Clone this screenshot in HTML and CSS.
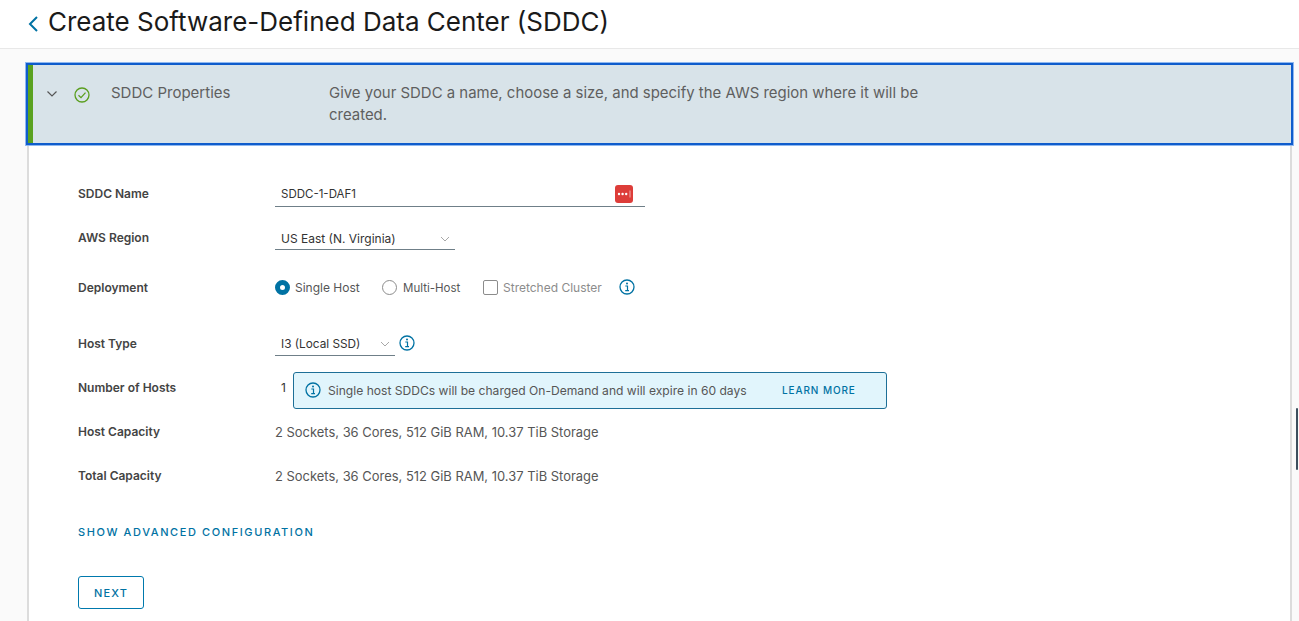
FILE: index.html
```html
<!DOCTYPE html>
<html lang="en">

<head>
    <meta charset="UTF-8">
    <title>Create SDDC</title>
    <link rel="stylesheet" href="styles.css">
</head>

<body>

    <header class="page-header">
        <svg class="back-icon" width="12" height="18" viewBox="0 0 12 18"><path d="M10 2 L3 9 L10 16" fill="none" stroke="#0072a3" stroke-width="2"/></svg>
        <h1>Create Software-Defined Data Center (SDDC)</h1>
    </header>

    <main class="content">
        <section class="card">
            <div class="step-header">
                <div class="step-bar"></div>
                <svg class="step-caret" width="12" height="8" viewBox="0 0 12 8"><path d="M1.5 1.5 L6 6 L10.5 1.5" fill="none" stroke="#565656" stroke-width="1.2"/></svg>
                <svg class="step-check" width="16" height="16" viewBox="0 0 16 16"><circle cx="8" cy="8" r="7" fill="none" stroke="#5a9e1e" stroke-width="1.3"/><path d="M4.5 8.2 L7 10.6 L11.5 5.6" fill="none" stroke="#5a9e1e" stroke-width="1.3"/></svg>
                <div class="step-title">SDDC Properties</div>
                <div class="step-desc">Give your SDDC a name, choose a size, and specify the AWS region where it will be created.</div>
            </div>

            <form class="step-form">
                <div class="row row-name">
                    <label>SDDC Name</label>
                    <div class="field field-name">
                        <span>SDDC-1-DAF1</span>
                        <svg class="pw-badge" width="18" height="18" viewBox="0 0 18 18"><rect width="18" height="18" rx="3" fill="#dd3d39"/><circle cx="4" cy="9" r="1.2" fill="#fff"/><circle cx="7.6" cy="9" r="1.2" fill="#fff"/><circle cx="11.2" cy="9" r="1.2" fill="#fff"/><path d="M15 5.5 V12.5" stroke="#f6c9c7" stroke-width="0.8"/></svg>
                    </div>
                </div>
                <div class="row row-region">
                    <label>AWS Region</label>
                    <div class="field field-region">
                        <span>US East (N. Virginia)</span>
                        <svg width="10" height="6" viewBox="0 0 10 6"><path d="M1 1 L5 5 L9 1" fill="none" stroke="#a8a8a8"/></svg>
                    </div>
                </div>
                <div class="row row-deploy">
                    <label>Deployment</label>
                    <div class="options">
                        <span class="option opt-single"><span class="radio radio-on"></span>Single Host</span>
                        <span class="option opt-multi"><span class="radio"></span>Multi-Host</span>
                        <span class="option opt-stretched"><span class="checkbox"></span>Stretched Cluster</span>
                        <svg class="info" width="16" height="16" viewBox="0 0 16 16"><circle cx="8" cy="8" r="7" fill="none" stroke="#0072a3" stroke-width="1.3"/><circle cx="8" cy="4.6" r="1" fill="#0072a3"/><path d="M6.3 7 H8.5 V11.4 M6.2 11.6 H10" fill="none" stroke="#0072a3" stroke-width="1.2"/></svg>
                    </div>
                </div>
                <div class="row row-host">
                    <label>Host Type</label>
                    <div class="field field-host">
                        <span>I3 (Local SSD)</span>
                        <svg width="10" height="6" viewBox="0 0 10 6"><path d="M1 1 L5 5 L9 1" fill="none" stroke="#a8a8a8"/></svg>
                    </div>
                    <svg class="info info-host" width="16" height="16" viewBox="0 0 16 16"><circle cx="8" cy="8" r="7" fill="none" stroke="#0072a3" stroke-width="1.3"/><circle cx="8" cy="4.6" r="1" fill="#0072a3"/><path d="M6.3 7 H8.5 V11.4 M6.2 11.6 H10" fill="none" stroke="#0072a3" stroke-width="1.2"/></svg>
                </div>
                <div class="row row-count">
                    <label>Number of Hosts</label>
                    <span class="count">1</span>
                    <div class="alert">
                        <svg width="16" height="16" viewBox="0 0 16 16"><circle cx="8" cy="8" r="7" fill="none" stroke="#0072a3" stroke-width="1.3"/><circle cx="8" cy="4.6" r="1" fill="#0072a3"/><path d="M6.3 7 H8.5 V11.4 M6.2 11.6 H10" fill="none" stroke="#0072a3" stroke-width="1.2"/></svg>
                        <span class="alert-text">Single host SDDCs will be charged On-Demand and will expire in 60 days</span>
                        <a class="alert-link">LEARN MORE</a>
                    </div>
                </div>
                <div class="row row-capacity">
                    <label>Host Capacity</label>
                    <span class="value">2 Sockets, 36 Cores, 512 GiB RAM, 10.37 TiB Storage</span>
                </div>
                <div class="row row-capacity">
                    <label>Total Capacity</label>
                    <span class="value">2 Sockets, 36 Cores, 512 GiB RAM, 10.37 TiB Storage</span>
                </div>
                <a class="advanced">SHOW ADVANCED CONFIGURATION</a>
                <button type="button" class="next">NEXT</button>
            </form>
        </section>
    </main>

    <div class="scroll-thumb"></div>

</body>

</html>
```

FILE: styles.css
```css
html, body {
    height: 100%;
}

body {
    font-family: 'Inter', 'Noto Sans', sans-serif;
    margin: 0;
    padding: 0;
    background-color: #fafafa;
    color: #565656;
    overflow: hidden;
}

.page-header {
    display: flex;
    align-items: center;
    height: 48px;
    padding-left: 27px;
    background-color: #fff;
    border-bottom: 1px solid #e8e8e8;
}

.back-icon {
    margin-right: 9px;
}

h1 {
    margin: 0;
    font-size: 26px;
    font-weight: 400;
    color: #1a1a1a;
    white-space: nowrap;
    padding-bottom: 5px;
}

.content {
    padding: 14px 7px 0 27px;
}

.card {
    background-color: #fff;
    border-left: 2px solid #dcdcdc;
    border-right: 2px solid #dcdcdc;
    height: 558px;
}

.step-header {
    display: flex;
    align-items: flex-start;
    height: 78px;
    margin-left: -3px;
    margin-right: -3px;
    background-color: #d8e3e9;
    border: 2px solid #0f5ccc;
    outline: 1px solid #8fb8f0;
}

.step-bar {
    width: 5px;
    height: 78px;
    background-color: #5aa220;
    flex-shrink: 0;
}

.step-caret {
    margin: 25px 0 0 13px;
    flex-shrink: 0;
}

.step-check {
    margin: 22px 0 0 16px;
    flex-shrink: 0;
}

.step-title {
    width: 218px;
    margin: 17px 0 0 21px;
    flex-shrink: 0;
    font-size: 15px;
    line-height: 22px;
    color: #5f5f5f;
}

.step-desc {
    width: 610px;
    margin-top: 17px;
    font-size: 14.95px;
    line-height: 22px;
    color: #5f5f5f;
}

.step-form {
    padding: 0 0 0 49px;
    font-size: 12px;
}

.row {
    display: flex;
    align-items: center;
    height: 24px;
}

.row label {
    width: 197px;
    flex-shrink: 0;
    font-size: 12px;
    font-weight: 600;
    color: #444;
}

.row-name {
    margin-top: 36px;
}

.row-region {
    margin-top: 20px;
}

.row-deploy {
    margin-top: 26px;
}

.row-host {
    margin-top: 32px;
}

.row-count {
    margin-top: 20px;
}

.row-capacity {
    margin-top: 20px;
}

.field {
    display: flex;
    align-items: center;
    justify-content: space-between;
    box-sizing: border-box;
    height: 26px;
    padding: 0 5px 0 6px;
    border-bottom: 1px solid #6f7f88;
    color: #333;
    font-size: 11.5px;
}

.field-name {
    width: 370px;
    margin-top: 2px;
    padding-right: 12px;
}

.field-region {
    width: 180px;
    padding-top: 4px;
    font-size: 12px;
}

.field-host {
    width: 120px;
    padding-top: 2px;
    font-size: 11.8px;
}

.options {
    display: flex;
    align-items: center;
    font-size: 11.5px;
    color: #565656;
}

.option {
    display: flex;
    align-items: center;
    gap: 6px;
    padding-top: 1px;
}

.opt-single {
    width: 107px;
    font-size: 12px;
    gap: 5px;
}

.opt-multi {
    width: 101px;
}

.opt-stretched {
    width: 136px;
    font-size: 12px;
    gap: 5px;
    color: #8c8c8c;
}

.radio {
    box-sizing: border-box;
    width: 15px;
    height: 15px;
    border-radius: 50%;
    border: 1px solid #8c8c8c;
    background-color: #fff;
}

.radio-on {
    border: 5px solid #0072a3;
}

.checkbox {
    box-sizing: border-box;
    width: 15px;
    height: 15px;
    border-radius: 2px;
    border: 1px solid #8c8c8c;
    background-color: #fff;
}

.info-host {
    margin-left: 4px;
}

.count {
    width: 18px;
    flex-shrink: 0;
    padding-left: 6px;
    box-sizing: border-box;
    color: #333;
    font-size: 12px;
}

.alert {
    display: flex;
    align-items: center;
    box-sizing: border-box;
    width: 594px;
    height: 37px;
    margin-top: 6px;
    padding-left: 11px;
    background-color: #e1f5fc;
    border: 1px solid #1d6f97;
    border-radius: 3px;
    flex-shrink: 0;
}

.alert-text {
    width: 454px;
    flex-shrink: 0;
    margin-left: 7px;
    font-size: 12.1px;
    color: #565656;
}

.alert-link {
    font-size: 10px;
    font-weight: 500;
    letter-spacing: 0.9px;
    color: #0072a3;
}

.value {
    padding-top: 1px;
    font-size: 12.95px;
    color: #565656;
}

.advanced {
    display: block;
    margin: 38px 0 0 0;
    font-size: 11px;
    font-weight: 500;
    letter-spacing: 1.6px;
    color: #0072a3;
}

.next {
    display: block;
    width: 66px;
    height: 33px;
    margin-top: 37px;
    padding: 0;
    font-family: inherit;
    font-size: 11px;
    font-weight: 500;
    letter-spacing: 1.2px;
    color: #0072a3;
    background-color: #fff;
    border: 1px solid #0079ad;
    border-radius: 3px;
}

.scroll-thumb {
    position: fixed;
    top: 408px;
    right: 1px;
    width: 2px;
    height: 62px;
    background-color: #3c4f5e;
    border-radius: 1px;
}
```
